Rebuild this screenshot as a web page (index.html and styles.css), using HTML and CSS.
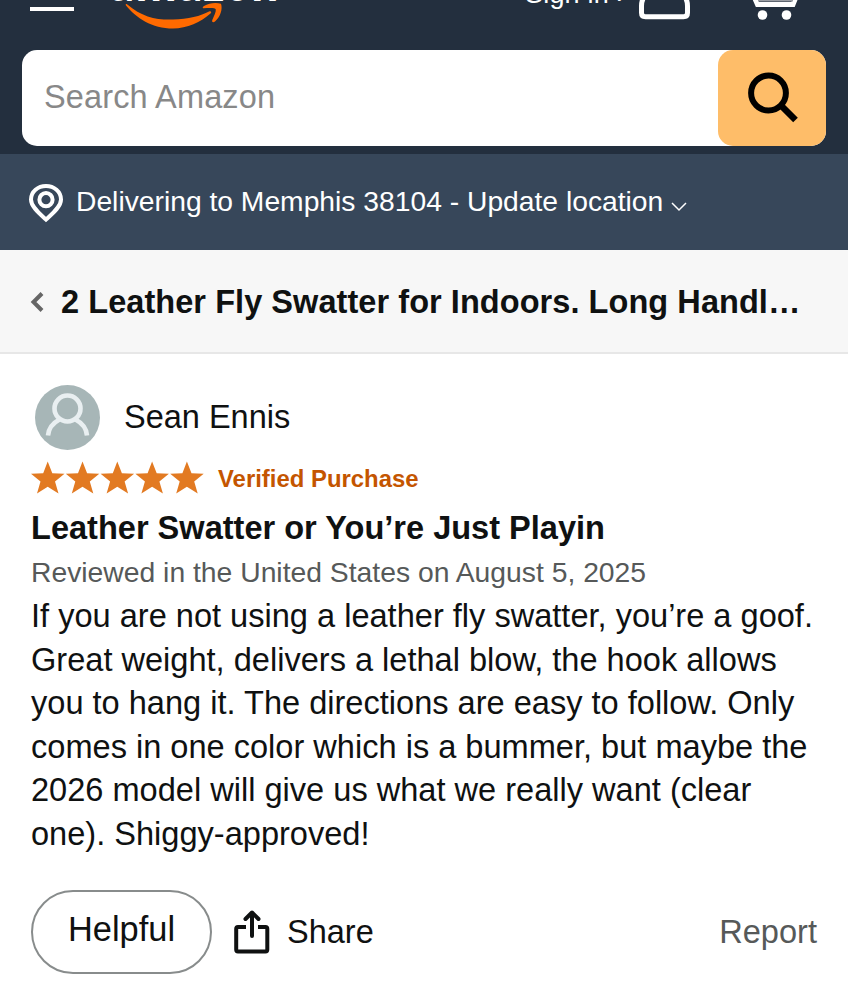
FILE: index.html
```html
<!DOCTYPE html>
<html lang="en">
<head>
    <meta charset="UTF-8">
    <title>Customer review</title>
    <link rel="stylesheet" href="styles.css">
</head>
<body>
<header class="header">
    <div class="nav">
        <span class="menu"></span>
        <svg class="logo" width="180" height="50" viewBox="0 0 180 50">
            <text x="5" y="1.200" textLength="170" lengthAdjust="spacingAndGlyphs">amazon</text>
            <path fill="#ff6a00" d="M23 4.200C38 17 52 20 69 19.500C84 19 97 16 105 11.500C107 10.500 108 12 106.500 13.500C97 22 83 28.500 69 28.500C48 28.500 32 18 22 5.500C21.300 4.300 22 3.500 23 4.200Z"/>
            <path fill="#ff6a00" d="M99.500 8.300C98.300 8 98.500 6.800 100 6C105 3 112 2.300 117 3.800C118.800 9 116.500 17 111 21.500C109 23 107.500 22 108.300 20C110 16 112 12 111.800 9.500C111.500 7.500 105 7.700 99.500 8.300Z"/>
        </svg>
        <a href="#" class="signin">Sign in ›</a>
        <svg class="user" width="54" height="50" viewBox="0 0 54 50">
            <path fill="none" stroke="#fff" stroke-width="5" d="M9 -6C5 -3 3.500 1 3.500 6V12.700Q3.500 16.700 7.500 16.700H45.500Q49.500 16.700 49.500 12.700V6C49.500 1 48 -3 44 -6"/>
        </svg>
        <svg class="cart" width="60" height="50" viewBox="0 0 60 50">
            <path fill="none" stroke="#fff" stroke-width="5" d="M8 -8L13.500 4.500H49L54 -8"/>
            <path stroke="#9a9da3" stroke-width="1.500" d="M14 .7H49"/>
            <circle cx="18.500" cy="15" r="4.800" fill="#fff"/>
            <circle cx="42.500" cy="15" r="4.800" fill="#fff"/>
        </svg>
    </div>
    <form class="search">
        <input type="text" class="search_text" placeholder="Search Amazon">
        <button type="button" class="search_btn">
            <svg width="52" height="52" viewBox="0 0 52 52" fill="none" stroke="#000">
                <circle cx="20.500" cy="21" r="17.400" stroke-width="6"/>
                <path stroke-width="6.500" d="M32.500 33L47.500 48"/>
            </svg>
        </button>
    </form>
</header>
<div class="location">
    <svg width="36" height="40" viewBox="0 0 36 40" fill="none" stroke="#fff">
        <path stroke-width="4" d="M18 36.500C12 31 3 24 3 16.500C3 8.500 10 3 18 3S33 8.500 33 16.500C33 24 24 31 18 36.500Z"/>
        <circle cx="18" cy="16.700" r="6.600" stroke-width="4"/>
    </svg>
    <span class="location_text">Delivering to Memphis 38104 - Update location</span>
    <svg class="location_arrow" width="16" height="10" viewBox="0 0 16 10" fill="none" stroke="#fff" stroke-width="1.500">
        <path d="M1 1L8 8L15 1"/>
    </svg>
</div>
<div class="product">
    <svg width="14" height="20" viewBox="0 0 14 20" fill="none" stroke="#666" stroke-width="4">
        <path d="M12 1.500L3.500 10L12 18.500"/>
    </svg>
    <h1 class="product_title">2 Leather Fly Swatter for Indoors. Long Handl…</h1>
</div>
<div class="review">
    <div class="profile">
        <svg width="65" height="65" viewBox="0 0 65 65">
            <circle cx="32.500" cy="32.500" r="32.500" fill="#a7b6b7"/>
            <g fill="none" stroke="#e9eff1" stroke-width="4.600">
                <circle cx="32.500" cy="23.500" r="13"/>
                <path d="M13 50.500C13.500 43 18 38 24.500 34.500M52 50.500C51.500 43 47 38 40.500 34.500"/>
            </g>
        </svg>
        <span class="name">Sean Ennis</span>
    </div>
    <div class="rating">
        <svg width="174" height="34" viewBox="0 0 174 34" fill="#e27a22">
            <defs>
                <path id="star" d="M16.700 .5L21.300 12.300L33.500 12.700L24 20.500L27.500 32.500L16.700 25.800L6 32.500L9.500 20.500L0 12.700L12.200 12.300Z"/>
            </defs>
            <use href="#star"/>
            <use href="#star" x="34.800"/>
            <use href="#star" x="69.600"/>
            <use href="#star" x="104.400"/>
            <use href="#star" x="139.200"/>
        </svg>
        <span class="verified">Verified Purchase</span>
    </div>
    <h2 class="review_title">Leather Swatter or You’re Just Playin</h2>
    <p class="date">Reviewed in the United States on August 5, 2025</p>
    <p class="review_text">
        If you are not using a leather fly swatter, you’re a goof.<br>
        Great weight, delivers a lethal blow, the hook allows<br>
        you to hang it. The directions are easy to follow. Only<br>
        comes in one color which is a bummer, but maybe the<br>
        2026 model will give us what we really want (clear<br>
        one). Shiggy-approved!
    </p>
    <div class="actions">
        <button type="button" class="helpful">Helpful</button>
        <a href="#" class="share">
            <svg width="36" height="44" viewBox="0 0 36 44" fill="none" stroke="#0f1111" stroke-width="4" stroke-linecap="round" stroke-linejoin="round">
                <path stroke-linecap="butt" d="M12 17H4Q2.200 17 2.200 19V39.500Q2.200 41.500 4 41.500H31.500Q33.300 41.500 33.300 39.500V19Q33.300 17 31.500 17H24"/>
                <path d="M18 26V3M11.500 9L18 2.500L24.500 9"/>
            </svg>
            <span>Share</span>
        </a>
        <a href="#" class="report">Report</a>
    </div>
</div>
</body>
</html>
```
FILE: styles.css
```css
*{margin:0;padding:0;box-sizing:border-box;}
body{width:848px;height:1000px;overflow:hidden;background:#fff;color:#0f1111;font-family:"Liberation Sans",Arial,sans-serif;}
a{color:inherit;text-decoration:none;}
svg{display:block;flex:none;}
.header{height:154px;padding:0 22px;background:#232f3e;}
.nav{display:flex;height:50px;overflow:hidden;}
.menu{width:44px;height:4px;margin:7px 0 0 8px;background:#fff;}
.logo{margin-left:30px;fill:#fff;font:bold 50px "Open Sans",sans-serif;}
.signin{margin:-21px 0 0 241px;color:#fff;font-size:27px;line-height:30px;letter-spacing:.2px;white-space:nowrap;width:113px;}
.cart{margin-left:52px;}
.search{display:flex;height:96px;border-radius:15px;background:#fff;}
.search_text{flex:1;min-width:0;padding:0 22px 2px;border:0;background:none;font:32.5px "Liberation Sans",Arial,sans-serif;letter-spacing:.13px;}
.search_text::placeholder{color:#888;}
.search_btn{display:flex;width:108.5px;padding:22px 0 0 30px;border:0;border-radius:15px;background:#febd69;}
.location{display:flex;height:96px;padding:29px 0 0 28px;background:#37475a;color:#fff;}
.location_text{margin-left:12px;font-size:28.25px;line-height:36px;white-space:nowrap;}
.location_arrow{margin:19px 0 0 8px;}
.product{display:flex;align-items:center;height:104px;padding:2px 0 0 30px;border-bottom:2px solid #e7e7e7;background:#f7f7f7;}
.product_title{margin-left:17px;font-size:32.5px;line-height:44px;letter-spacing:.06px;white-space:nowrap;}
.review{padding:31px 31px 0;}
.profile{display:flex;align-items:center;padding-left:4px;}
.name{margin-left:24px;font-size:32.5px;}
.rating{display:flex;align-items:center;height:36px;margin-top:10px;}
.verified{margin:2px 0 0 13px;color:#c45500;font-size:23.9px;font-weight:bold;}
.review_title{margin-top:10px;font-size:32.55px;line-height:44px;white-space:nowrap;}
.date{margin-top:3px;color:#565959;font-size:28.3px;line-height:38px;white-space:nowrap;}
.review_text{margin-top:4px;font-size:32.57px;line-height:43.5px;white-space:nowrap;}
.actions{display:flex;align-items:center;margin-top:34px;}
.helpful{width:181px;height:84px;padding-bottom:5px;border:2px solid #888c8c;border-radius:42px;background:#fff;color:#0f1111;font:34.4px "Liberation Sans",Arial,sans-serif;}
.share{display:flex;align-items:center;margin-left:22px;font-size:32.5px;}
.share span{margin-left:17px;}
.report{margin-left:auto;color:#565959;font-size:32.6px;}
```
